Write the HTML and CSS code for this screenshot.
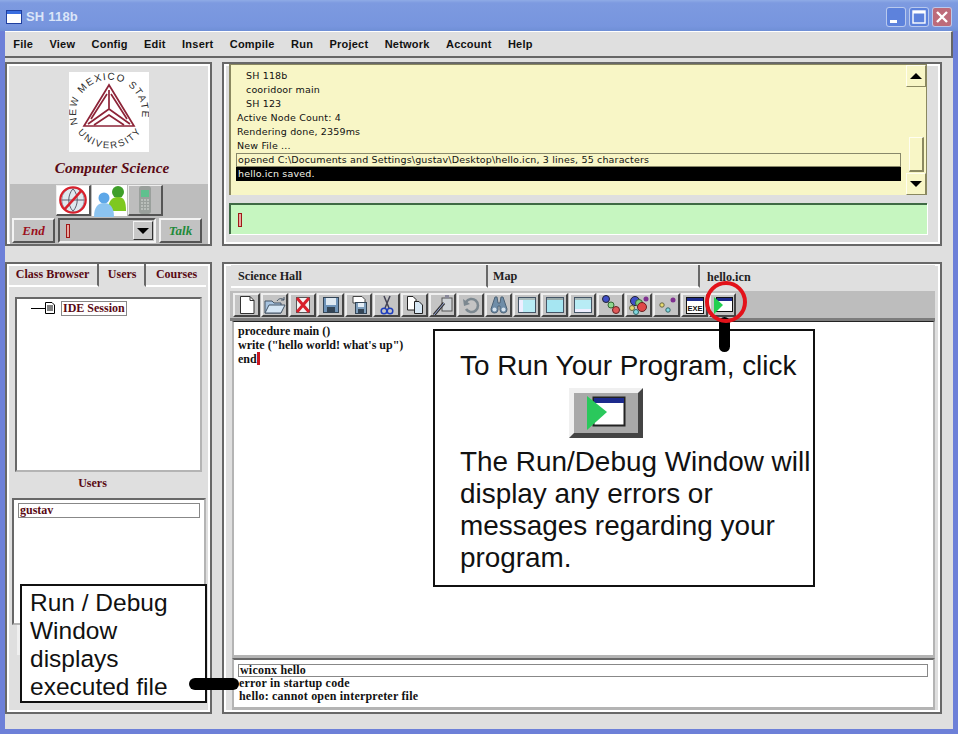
FILE: index.html
```html
<!DOCTYPE html>
<html lang="en">
<head>
<meta charset="utf-8">
<title>SH 118b</title>
<link rel="stylesheet" href="styles.css">
</head>
<body>
<div class="window">
  <header class="titlebar">
    <svg class="app-icon" width="16" height="14" viewBox="0 0 16 14"><rect x="0.5" y="0.5" width="15" height="13" fill="#fff" stroke="#1f3f9f"/><rect x="1" y="1" width="14" height="3" fill="#3a6ee0"/></svg>
    <span class="title-text">SH 118b</span>
    <div class="winbtns">
      <span class="winbtn"><svg width="20" height="20" viewBox="0 0 20 20"><rect x="4" y="13" width="7" height="3" fill="#fff"/></svg></span>
      <span class="winbtn"><svg width="20" height="20" viewBox="0 0 20 20"><rect x="4" y="4" width="12" height="12" fill="none" stroke="#fff" stroke-width="1.4"/><rect x="4" y="4" width="12" height="2.5" fill="#fff"/></svg></span>
      <span class="winbtn close"><svg width="20" height="20" viewBox="0 0 20 20"><path d="M5 5l10 10M15 5L5 15" stroke="#fff" stroke-width="2.4"/></svg></span>
    </div>
  </header>
  <div class="client">
    <nav class="menubar">
      <span class="menu">File</span><span class="menu">View</span><span class="menu">Config</span><span class="menu">Edit</span><span class="menu">Insert</span><span class="menu">Compile</span><span class="menu">Run</span><span class="menu">Project</span><span class="menu">Network</span><span class="menu">Account</span><span class="menu">Help</span>
    </nav>
    <div class="workspace">
      <section class="panel brand">
        <svg class="logo" width="80" height="80" viewBox="0 0 80 80">
          <rect width="80" height="80" fill="#fff"/>
          <defs>
            <path id="arcTop" d="M9 52A33 33 0 1 1 71 52"/>
            <path id="arcBot" d="M2 46A39 39 0 0 0 78 46"/>
          </defs>
          <text class="logo-text top-arc"><textPath href="#arcTop" startOffset="0">NEW MEXICO STATE</textPath></text>
          <text class="logo-text bottom-arc"><textPath href="#arcBot" startOffset="16">UNIVERSITY</textPath></text>
          <g fill="none" stroke="#8d2438" stroke-width="1.7" stroke-linejoin="miter">
            <path d="M40 13L15 54H65Z"/>
            <path d="M40 18V37L19 52M40 37L61 52M38 22L22 47M42 22L58 47"/>
            <path d="M25 53L40 43L55 53"/>
          </g>
        </svg>
        <div class="dept">Computer Science</div>
        <div class="controls">
          <div class="status-icons">
            <span class="status-btn white"><svg width="34" height="30" viewBox="0 0 34 30"><ellipse cx="17" cy="15" rx="12" ry="13" fill="#dfe8ee" stroke="#8a97a8"/><path d="M17 3C11 10 11 20 17 27M17 3C23 10 23 20 17 27M5 15h24" stroke="#556" fill="none"/><circle cx="17" cy="15" r="13.5" fill="none" stroke="#d8202c" stroke-width="2.4"/><path d="M26 5L8 25" stroke="#d8202c" stroke-width="2.6"/></svg></span>
            <span class="status-btn active"><svg width="34" height="32" viewBox="0 0 34 32"><circle cx="25" cy="7" r="6" fill="#3f9f2a"/><path d="M15 26c0-10 4-14 10-14s8 4 8 14z" fill="#7ec820"/><circle cx="11" cy="13" r="5.500" fill="#5da7e8"/><path d="M1 32c0-10 4-14 10-14s10 4 10 14z" fill="#8cc4f0"/></svg></span>
            <span class="status-btn"><svg width="18" height="30" viewBox="0 0 18 30"><rect x="3" y="1" width="12" height="28" rx="3" fill="#9aa09c"/><rect x="5" y="5" width="8" height="7" fill="#5fc08e"/><path d="M5 15h8M5 18h8M5 21h8M5 24h8" stroke="#d8dcd8" stroke-dasharray="2 1"/></svg></span>
          </div>
          <div class="talk-row">
            <button class="action end">End</button>
            <div class="combo"><span class="caret"></span><span class="combo-arrow"><span class="tri-down"></span></span></div>
            <button class="action talk">Talk</button>
          </div>
        </div>
      </section>

      <section class="panel console">
        <div class="log">
          <div class="log-lines">
            <div class="log-line indent">SH 118b</div>
            <div class="log-line indent">cooridoor main</div>
            <div class="log-line indent">SH 123</div>
            <div class="log-line">Active Node Count: 4</div>
            <div class="log-line">Rendering done, 2359ms</div>
            <div class="log-line">New File ...</div>
            <div class="log-line boxed">opened C:\Documents and Settings\gustav\Desktop\hello.icn, 3 lines, 55 characters</div>
            <div class="log-line inverted">hello.icn saved.</div>
          </div>
          <div class="scrollbar">
            <span class="sb-btn"><span class="tri-up"></span></span>
            <span class="sb-track"><span class="sb-thumb"></span></span>
            <span class="sb-btn"><span class="tri-down"></span></span>
          </div>
        </div>
        <div class="chat-input"><span class="caret"></span></div>
      </section>

      <section class="panel browser">
        <div class="side-tabs">
          <span class="side-tab">Class Browser</span>
          <span class="side-tab current">Users</span>
          <span class="side-tab">Courses</span>
        </div>
        <div class="tree">
          <div class="tree-row">
            <span class="tree-line"></span>
            <svg width="10" height="12" viewBox="0 0 10 12"><path d="M.5.5H7L9.500 3V11.500H.5Z" fill="#fff" stroke="#000"/><path d="M2 4h6M2 6h6M2 8h6" stroke="#000"/></svg>
            <span class="tree-label">IDE Session</span>
          </div>
        </div>
        <div class="users-label">Users</div>
        <div class="user-list"><div class="user-item">gustav</div></div>
        <div class="user-foot"></div>
      </section>

      <section class="panel editor-panel">
        <div class="doc-tabs">
          <span class="doc-tab t1">Science Hall</span>
          <span class="doc-tab t2">Map</span>
          <span class="doc-tab current">hello.icn</span>
        </div>
        <div class="toolbar">
          <span class="tool"><svg width="16" height="18" viewBox="0 0 16 18"><path d="M1.500.5H11L15 4.500V17.500H1.500Z" fill="#fff" stroke="#333"/><path d="M11 .5V4.500H15" fill="none" stroke="#333"/></svg></span>
          <span class="tool"><svg width="22" height="18" viewBox="0 0 22 18"><path d="M1 5h7l2 2h7v10H1Z" fill="#a8c4e0" stroke="#456"/><path d="M1 17l4-8h16l-4 8Z" fill="#d5e6f5" stroke="#456"/><path d="M13 5c2-3 5-3 7-1M20 1v3h-3" fill="none" stroke="#456"/></svg></span>
          <span class="tool"><svg width="16" height="18" viewBox="0 0 16 18"><rect x="1.500" y="1.500" width="13" height="15" fill="#f3f3f3" stroke="#555"/><path d="M2 2l12 14M14 2L2 16" stroke="#d8202c" stroke-width="3"/></svg></span>
          <span class="tool"><svg width="16" height="16" viewBox="0 0 16 16"><rect x=".5" y=".5" width="15" height="15" fill="#6f93b8" stroke="#345"/><rect x="3" y="1" width="10" height="7" fill="#dfe9f2"/><rect x="4" y="10" width="8" height="5" fill="#345"/></svg></span>
          <span class="tool"><svg width="18" height="18" viewBox="0 0 18 18"><path d="M3 .5h9l3 3V7H3Z" fill="#fff" stroke="#444"/><rect x="5.500" y="6.500" width="11" height="11" fill="#7f9fbd" stroke="#345"/><rect x="8" y="7" width="6" height="4" fill="#e3edf5"/><rect x="8" y="13" width="6" height="4" fill="#345"/></svg></span>
          <span class="tool"><svg width="14" height="20" viewBox="0 0 14 20"><path d="M4 1l5 12M10 1L5 13" stroke="#445" stroke-width="1.500"/><circle cx="4" cy="16" r="2.800" fill="none" stroke="#1f3fbf" stroke-width="1.500"/><circle cx="10" cy="16" r="2.800" fill="none" stroke="#1f3fbf" stroke-width="1.500"/></svg></span>
          <span class="tool"><svg width="18" height="18" viewBox="0 0 18 18"><path d="M1.500.5H7L10 3.500V14H1.500Z" fill="#fff" stroke="#222"/><path d="M8.500 5.500H13L16.500 9V17.500H8.500Z" fill="#d8e8f5" stroke="#222"/></svg></span>
          <span class="tool"><svg width="20" height="22" viewBox="0 0 20 22"><rect x="9" y="4" width="10" height="13" fill="#cfd4d8" stroke="#555"/><rect x="12" y="1" width="4" height="3" fill="#889"/><path d="M1 21L11 9" stroke="#333" stroke-width="3"/><path d="M1 21L11 9" stroke="#9ad" stroke-width="1"/></svg></span>
          <span class="tool"><svg width="18" height="18" viewBox="0 0 18 18"><path d="M4 6a6.500 6.500 0 1 1 0 7" fill="none" stroke="#7c8890" stroke-width="2.600"/><path d="M1 3l1 7 6-2Z" fill="#7c8890"/></svg></span>
          <span class="tool"><svg width="20" height="18" viewBox="0 0 20 18"><path d="M6 1h2l1 6h2l1-6h2l4 12a3.500 3.500 0 0 1-7 1V10H9v4a3.500 3.500 0 0 1-7-1Z" fill="#6f8da8" stroke="#4c6276"/><circle cx="5.500" cy="13.500" r="2" fill="#d5e2ee"/><circle cx="14.500" cy="13.500" r="2" fill="#d5e2ee"/></svg></span>
          <span class="tool"><svg width="18" height="16" viewBox="0 0 18 16"><rect x=".5" y=".5" width="17" height="15" fill="#b8ecf5" stroke="#456"/><rect x="1" y="1" width="16" height="2" fill="#abb"/><rect x="1" y="3" width="4" height="12" fill="#eef"/></svg></span>
          <span class="tool"><svg width="18" height="16" viewBox="0 0 18 16"><rect x=".5" y=".5" width="17" height="15" fill="#a6e6f2" stroke="#456"/><rect x="1" y="1" width="16" height="2" fill="#9aa"/></svg></span>
          <span class="tool"><svg width="18" height="16" viewBox="0 0 18 16"><rect x=".5" y=".5" width="17" height="15" fill="#b8ecf5" stroke="#456"/><rect x="1" y="1" width="16" height="2" fill="#abb"/><rect x="1" y="12" width="16" height="3" fill="#eef"/></svg></span>
          <span class="tool"><svg width="20" height="20" viewBox="0 0 20 20"><path d="M4 4l6 7 6 6" stroke="#555" fill="none"/><circle cx="5" cy="4" r="3.500" fill="#4050c8" stroke="#223"/><circle cx="10" cy="10" r="3" fill="#8fd88f" stroke="#363"/><circle cx="15" cy="15" r="3.500" fill="#e05858" stroke="#622"/></svg></span>
          <span class="tool"><svg width="22" height="20" viewBox="0 0 22 20"><circle cx="7" cy="6" r="4.500" fill="#4050c8" stroke="#223"/><circle cx="11" cy="8" r="3.500" fill="#7cd07c" stroke="#363"/><circle cx="14" cy="12" r="4.500" fill="#e04848" stroke="#622"/><circle cx="18" cy="4" r="2.500" fill="#803090"/><circle cx="4" cy="13" r="2.500" fill="#e8dc70" stroke="#664"/><circle cx="8" cy="17" r="2.500" fill="#80d8e0" stroke="#366"/></svg></span>
          <span class="tool"><svg width="18" height="16" viewBox="0 0 18 16"><circle cx="15" cy="3" r="2.500" fill="#803090"/><circle cx="4" cy="8" r="2.200" fill="#e8dc70" stroke="#664"/><circle cx="10" cy="13" r="2.200" fill="#80d8e0" stroke="#366"/></svg></span>
          <span class="tool"><svg class="exe" width="18" height="17" viewBox="0 0 18 17"><rect x=".5" y=".5" width="17" height="16" fill="#fff" stroke="#111"/><rect x="1" y="1" width="16" height="3" fill="#1c2a8c"/><text x="9" y="13.500" class="exe-text">EXE</text></svg></span>
          <span class="tool"><svg width="20" height="18" viewBox="0 0 20 18"><rect x="3.500" y="1.500" width="16" height="14" fill="#fff" stroke="#111"/><rect x="4" y="2" width="15" height="3" fill="#1c2a8c"/><path d="M1 1L10 9L1 18Z" fill="#22d050"/></svg></span>
        </div>
        <div class="editor">
          <div class="code">procedure main ()</div>
          <div class="code">write ("hello world! what's up")</div>
          <div class="code">end<span class="text-cursor"></span></div>
        </div>
        <div class="output">
          <div class="output-line boxed-out">wiconx hello</div>
          <div class="output-line">error in startup code</div>
          <div class="output-line">hello: cannot open interpreter file</div>
        </div>
      </section>
    </div>
  </div>

  <aside class="callout callout-run">
    <p>To Run Your Program, click</p>
    <div class="big-run"><svg width="40" height="34" viewBox="0 0 40 34"><rect x="7.500" y="1.500" width="31" height="28" fill="#fff" stroke="#222" stroke-width="2"/><rect x="8" y="2" width="30" height="5" fill="#1c2a8c"/><path d="M1 0L21 16L1 34Z" fill="#2ac85c"/></svg></div>
    <p>The Run/Debug Window will display any errors or messages regarding your program.</p>
  </aside>
  <aside class="callout callout-debug">Run / Debug Window displays executed file</aside>
  <span class="pointer pointer-v"></span>
  <span class="pointer pointer-h"></span>
  <span class="ring"></span>
</div>
</body>
</html>
```
FILE: styles.css
```css
* { box-sizing: border-box; }
html, body { margin: 0; padding: 0; }
body { width: 958px; height: 734px; overflow: hidden; font-family: "Liberation Sans", sans-serif; }
p { margin: 0; }

.window {
  position: relative; width: 958px; height: 734px;
  display: flex; flex-direction: column;
  background: #6d80d8;
}

.titlebar {
  height: 31px; flex: none; display: flex; align-items: center; padding: 2px 6px 0 6px;
  background: linear-gradient(#8fabe6 0, #7d9ae0 3px, #7795de 26px, #6f8fd6 100%);
}
.app-icon { flex: none; }
.title-text { margin-left: 4px; font: bold 13px "Liberation Sans", sans-serif; color: #dbe5f8; letter-spacing: .2px; }
.winbtns { margin-left: auto; display: flex; gap: 3px; }
.winbtn {
  width: 20px; height: 20px; display: block; border-radius: 3px;
  background: #5d82dc; box-shadow: inset 0 0 0 1px #b9c9ee;
}
.winbtn svg { display: block; }
.winbtn.close { background: #bd6b7a; }

.client {
  flex: 1; margin: 0 5px 5px; min-height: 0;
  display: flex; flex-direction: column;
  background: #dfdfdf;
}

.menubar {
  height: 27px; flex: none; display: flex; align-items: center; padding: 0 0 1px 0;
  background: #dfdfdf;
  border-top: 1px solid #fff; border-bottom: 2px solid #666; border-right: 2px solid #666;
}
.menu { padding: 0 8.2px; font: bold 11px "Liberation Sans", sans-serif; color: #111; letter-spacing: .22px; }

.workspace {
  flex: 1; display: grid;
  grid-template-columns: 207px 720px;
  grid-template-rows: 184px 452px;
  column-gap: 10px; row-gap: 16px;
  padding: 4px 0 0 0;
}
.panel {
  border: 2px solid #686868;
  box-shadow: inset 0 0 0 2px #fff;
  background: #dfdfdf;
  min-width: 0; min-height: 0;
}

/* brand panel */
.brand { padding: 8px 2px 0 3px; display: flex; flex-direction: column; align-items: center; }
.logo { flex: none; display: block; }
.logo-text { font: 9.5px "Liberation Sans", sans-serif; fill: #2c2c2c; }
.top-arc { font-size: 10px; letter-spacing: 1.35px; }
.bottom-arc { letter-spacing: 1.8px; }
.dept {
  margin: 7px 0 0 6px; height: 18px; font: italic bold 15.2px/18px "Liberation Serif", serif;
  color: #5a0a14;
}
.controls {
  margin-top: 7px; width: 198px; flex: 1; background: #bdbdbd;
  display: flex; flex-direction: column; padding-top: 1px;
}
.status-icons { display: flex; justify-content: center; gap: 1px; padding-left: 1px; height: 33px; }
.status-btn {
  width: 35px; height: 31px; display: flex; align-items: center; justify-content: center;
  background: #bdbdbd; border-right: 2px solid #555; border-bottom: 2px solid #555;
  border-top: 1px solid #eee; border-left: 1px solid #eee;
}
.status-btn.white { background: #fff; }
.status-btn.active { background: #fff; border: 0; }
.talk-row { display: flex; align-items: flex-start; gap: 3px; padding-left: 2px; }
.action {
  width: 43px; height: 25px; padding: 0;
  background: #c2c2c2;
  border: 2px solid; border-color: #f3f3f3 #555 #555 #f3f3f3;
  font: italic bold 13px "Liberation Serif", serif;
}
.end { color: #9b0f1c; }
.talk { color: #1f8a3a; }
.combo {
  width: 98px; height: 25px; position: relative; display: flex; align-items: center; justify-content: space-between;
  background: #bdbdbd; border: 2px solid; border-color: #555 #f3f3f3 #f3f3f3 #555; padding-left: 6px;
}
.combo-arrow {
  width: 20px; height: 19px; margin-right: 1px; display: flex; align-items: center; justify-content: center;
  background: #c8c8c8; border: 1px solid; border-color: #f3f3f3 #333 #333 #f3f3f3;
}
.caret { display: block; width: 4px; height: 14px; background: #e8a8a0; border: 1px solid #a01818; }
.tri-down { width: 0; height: 0; border-left: 6px solid transparent; border-right: 6px solid transparent; border-top: 6px solid #000; }
.tri-up { width: 0; height: 0; border-left: 6px solid transparent; border-right: 6px solid transparent; border-bottom: 6px solid #000; }

/* console */
.console { padding: 0 13px 0 5px; display: flex; flex-direction: column; }
.log {
  height: 131px; display: flex; background: #f8f6c6;
  border-top: 1px solid #8a8860; border-left: 2px solid #8a8860;
}
.log-lines { flex: 1; min-width: 0; padding: 4px 5px 0 5px; }
.log-line {
  height: 14px; font: 9.5px/14px "DejaVu Sans", sans-serif; letter-spacing: .16px; color: #111; white-space: nowrap; padding-left: 1px;
}
.log-line.indent { padding-left: 10px; }
.log-line.boxed { height: 14px; border: 1px solid #88886a; line-height: 12px; padding-left: 1px; }
.log-line.inverted { background: #000; color: #f4f4e8; padding-left: 2px; }
.scrollbar { width: 21px; flex: none; display: flex; flex-direction: column; margin-right: 0; border-right: 1px solid #8a8860; }
.sb-btn {
  height: 22px; flex: none; display: flex; align-items: center; justify-content: center;
  border: 1px solid; border-color: #fffef0 #8a8860 #8a8860 #fffef0;
}
.sb-track { flex: 1; display: flex; align-items: flex-end; justify-content: center; padding: 0 2px 1px 2px; }
.sb-thumb { width: 15px; height: 35px; display: block; border: 1px solid; border-width: 1px 2px 2px 1px; border-color: #fffef0 #8a8860 #8a8860 #fffef0; }
.chat-input {
  margin-top: 8px; height: 31px; display: flex; align-items: center; padding-left: 7px;
  background: #c6f6c0; border-top: 2px solid #3f6a44; border-left: 2px solid #3f6a44;
  box-shadow: 1px 1px 0 #fff;
}

/* left browser */
.browser { display: flex; flex-direction: column; padding: 0 4px 0 0; }
.side-tabs { height: 23px; display: flex; flex: none; }
.side-tab {
  display: flex; align-items: center; justify-content: center; height: 23px; padding: 0 0 0 1px;
  font: bold 12px "Liberation Serif", serif; color: #5a0a14;
  border-bottom: 2px solid #fff; border-right: 2px solid #686868;
}
.side-tab:nth-child(1) { width: 94px; }
.side-tab:nth-child(2) { width: 48px; }
.side-tab:nth-child(3) { width: 61px; border-right: 0; }
.side-tab.current { border-bottom-color: transparent; }
.tree {
  margin: 10px 0 0 8px; width: 187px; height: 175px; flex: none; background: #fff;
  border: 2px solid; border-color: #686868 #b4b4b4 #b4b4b4 #686868;
  padding: 1px 0 0 14px;
}
.tree-row { display: flex; align-items: center; height: 16px; }
.tree-line { width: 14px; height: 1px; background: #000; margin-right: 0; }
.tree-label {
  margin-left: 6px; padding: 0 1px; height: 15px; border: 1px solid #888; color: #5a0a14;
  font: bold 12px/12px "Liberation Serif", serif; white-space: nowrap;
}
.users-label {
  height: 26px; flex: none; text-align: center; padding: 4px 28px 0 0; font: bold 12px/14px "Liberation Serif", serif; color: #5a0a14;
}
.user-list {
  margin-left: 5px; width: 194px; height: 127px; flex: none; background: #fff;
  border: 2px solid; border-color: #686868 #b4b4b4 #b4b4b4 #686868; padding: 3px 4px 0 4px;
}
.user-item { height: 15px; border: 1px solid #888; font: bold 12px/12px "Liberation Serif", serif; color: #5a0a14; padding-left: 1px; }
.user-foot { margin-left: 10px; width: 30px; height: 30px; flex: none; background: #f0f0f0; }

/* editor */
.editor-panel { display: flex; flex-direction: column; padding: 1px 5px 0 7px; }
.doc-tabs { height: 24px; display: flex; flex: none; }
.doc-tab {
  display: flex; align-items: center; height: 23px; padding: 1px 0 0 7px;
  font: bold 12.2px "Liberation Serif", serif; color: #222;
  background: #dfdfdf;
  border-bottom: 2px solid #fff; border-right: 2px solid #686868;
}
.doc-tab.t1 { width: 257px; }
.doc-tab.t2 { width: 212px; padding-left: 5px; }
.doc-tab.current { flex: 1; border: 0; padding-left: 7px; }
.toolbar {
  height: 30px; flex: none; margin: 2px 0 0 -1px; padding: 2px 0 0 3px; display: flex; gap: 1px; background: #bdbdbd;
  border-bottom: 3px solid #7d7d7d;
}
.tool {
  width: 27px; height: 24px; display: flex; align-items: center; justify-content: center;
  background: #c4c4c4; border: 2px solid; border-color: #efefef #444 #444 #efefef;
  overflow: hidden;
}
.exe-text { font: bold 7.500px "Liberation Sans", sans-serif; text-anchor: middle; fill: #111; }
.editor {
  height: 337px; flex: none; background: #fff; padding: 2px 0 0 4px;
  margin-left: 1px;
  border-top: 1px solid #222; border-left: 2px solid #b4b4b4; border-right: 2px solid #b4b4b4;
  border-bottom: 3px solid #b4b4b4;
}
.code { height: 14px; font: bold 12px/14px "Liberation Serif", serif; color: #111; white-space: nowrap; }
.text-cursor { display: inline-block; width: 3px; height: 13px; vertical-align: -2px; background: #c81820; }
.output {
  height: 52px; flex: none; background: #fff; padding: 4px 5px 0 4px;
  margin-left: 1px;
  border-top: 2px solid #686868; border-left: 2px solid #b4b4b4; border-right: 2px solid #b4b4b4; border-bottom: 3px solid #b4b4b4;
}
.output-line { height: 13px; font: bold 12px/13px "Liberation Serif", serif; letter-spacing: .2px; color: #111; white-space: nowrap; padding-left: 1px; }
.boxed-out { border: 1px solid #888; line-height: 11px; height: 13px; padding-left: 1px; }

/* annotation overlays */
.callout { position: absolute; background: #fff; border: 2px solid #111; color: #111; font-family: "Liberation Sans", sans-serif; }
.callout-run { left: 433px; top: 329px; width: 382px; height: 258px; padding: 19px 0 0 25px; font-size: 27.9px; line-height: 32px; }
.big-run {
  width: 74px; height: 50px; margin: 6px 0 8px 109px;
  display: flex; align-items: center; justify-content: center;
  background: #a9a9a9; border: 5px solid; border-color: #f0f0f0 #444 #444 #f0f0f0;
}
.callout-debug { left: 20px; top: 584px; width: 187px; height: 119px; padding: 3px 0 0 8px; font-size: 24.5px; line-height: 28px; }
.pointer { position: absolute; background: #000; border-radius: 6px; }
.pointer-v { left: 719px; top: 317px; width: 11px; height: 35px; }
.pointer-h { left: 189px; top: 678px; width: 50px; height: 12px; }
.ring { position: absolute; left: 705px; top: 281px; width: 42px; height: 42px; border-radius: 50%; border: 4px solid #e3121a; }
```
